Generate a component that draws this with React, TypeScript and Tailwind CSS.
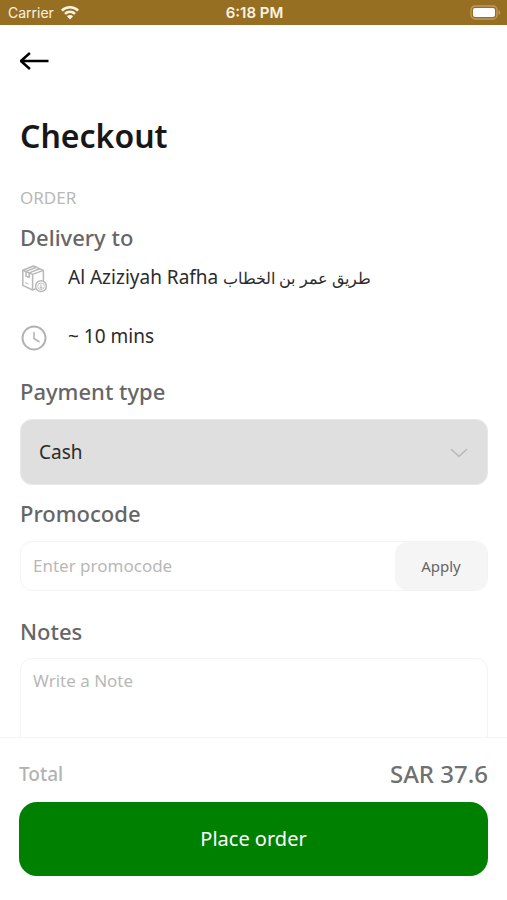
import React, { useState } from "react";

interface SectionTitleProps {
  htmlFor?: string;
  children: React.ReactNode;
}

const WifiIcon = () => (
  <svg viewBox="0 0 20 15" className="w-5 h-[15px]" fill="none" stroke="currentColor" strokeWidth="2.6">
    <path d="M1.9 5.6a11.4 11.4 0 0 1 16.2 0" />
    <path d="M5 8.9a7 7 0 0 1 10 0" />
    <path d="M10 14.4 6.9 11.2a4.4 4.4 0 0 1 6.2 0Z" fill="currentColor" stroke="none" />
  </svg>
);

const BatteryIcon = () => (
  <svg viewBox="0 0 31 15" className="w-[31px] h-[15px]" fill="none">
    <rect x="1" y="1" width="26" height="13" rx="4" stroke="#c09a60" strokeWidth="1.3" />
    <rect x="3" y="3" width="22" height="9" rx="2" fill="#fff" />
    <path d="M28.5 5v5c1-.4 1.7-1.4 1.7-2.5s-.7-2.1-1.7-2.5Z" fill="#c09a60" />
  </svg>
);

const BackIcon = () => (
  <svg
    viewBox="0 0 30 24"
    className="w-[30px] h-6"
    fill="none"
    stroke="currentColor"
    strokeWidth="2.4"
    strokeLinejoin="round"
  >
    <path d="M28.5 12H.9M9.9 4 .9 12l9 8" />
  </svg>
);

const PackageIcon = () => (
  <svg
    viewBox="0 0 28 28"
    className="w-7 h-7 mt-1 shrink-0"
    fill="none"
    stroke="#b8b8b8"
    strokeWidth="1.5"
    strokeLinejoin="round"
  >
    <path d="M17 23.4 12.6 25 2.8 20.4V5.2L12.6 9.4V25M12.6 9.4 23.4 5.4V16M2.800 5.200 13.400 1 23.400 5.400" />
    <path d="M6 6.400 16.400 2.300M9.200 7.900 19.800 3.800M6 6.600V11l3.200 1.400V7.900" />
    <path d="M5 17.500l3.400 1.600" strokeWidth="1" />
    <circle cx="21" cy="21.200" r="5.400" fill="#fff" />
    <circle cx="21" cy="21.200" r="3.300" strokeWidth=".8" />
    <path d="M21 23.500v-4.400M19.700 21.900l1.300 1.400 1.300-1.400" strokeWidth="1" />
  </svg>
);

const ClockIcon = () => (
  <svg viewBox="0 0 28 28" className="w-7 h-7 mt-1 shrink-0" fill="none" stroke="#b3b3b3">
    <circle cx="14" cy="14" r="11.5" strokeWidth="2" />
    <path d="M14 8v6.500l5.500 3.500" strokeWidth="1.5" />
  </svg>
);

const ChevronIcon = () => (
  <svg
    viewBox="0 0 18 10"
    className="pointer-events-none absolute right-5 top-[29px] w-[18px] h-[10px]"
    fill="none"
    stroke="#b8b8b8"
    strokeWidth="1.5"
  >
    <path d="M1 1l8 7.5L17 1" />
  </svg>
);

const SectionTitle: React.FC<SectionTitleProps> = ({ htmlFor, children }) => {
  const classes = "block text-[22px] leading-8 font-medium text-[#666666]";

  return htmlFor ? (
    <h2>
      <label htmlFor={htmlFor} className={classes}>
        {children}
      </label>
    </h2>
  ) : (
    <h2 className={classes}>{children}</h2>
  );
};

const App: React.FC = () => {
  const [payment, setPayment] = useState("cash");
  const [promocode, setPromocode] = useState("");
  const [note, setNote] = useState("");

  return (
    <div className="h-screen flex flex-col bg-white font-['Noto_Sans',sans-serif]">
      {/* Status bar */}
      <div className="grid grid-cols-3 items-center h-[25px] shrink-0 pl-2 pr-1.5 bg-[#966f22] text-[#fbf3e4] text-sm font-['Inter',sans-serif]">
        <div className="flex items-center gap-1.5">
          <span>Carrier</span>
          <WifiIcon />
        </div>
        <span className="text-center text-[15px] font-semibold">6:18 PM</span>
        <div className="flex justify-end">
          <BatteryIcon />
        </div>
      </div>

      <main className="flex-1 min-h-0 overflow-y-auto [scrollbar-width:none] pl-5 pr-[19px]">
        <button type="button" aria-label="Back" className="block mt-6 text-black">
          <BackIcon />
        </button>

        <h1 className="mt-[43px] text-[32px] leading-10 font-semibold text-[#171717]">Checkout</h1>

        {/* Order */}
        <p className="mt-[30px] text-[17px] leading-6 text-[#b8b8b8]">ORDER</p>
        <div className="mt-[11px]">
          <SectionTitle>Delivery to</SectionTitle>
        </div>
        <div className="mt-2 flex items-center gap-5 text-[19px] leading-8 text-[#2b2b2b]">
          <PackageIcon />
          <span>
            Al Aziziyah Rafha <bdi lang="ar" className="text-base">طريق عمر بن الخطاب</bdi>
          </span>
        </div>
        <div className="mt-[27px] flex items-center gap-5 text-[19px] leading-8 text-[#2b2b2b]">
          <ClockIcon />
          <span>~ 10 mins</span>
        </div>

        {/* Payment */}
        <div className="mt-[23px]">
          <SectionTitle htmlFor="payment">Payment type</SectionTitle>
        </div>
        <div className="relative mt-3">
          <select
            id="payment"
            value={payment}
            onChange={(e) => setPayment(e.target.value)}
            className="w-full h-[66px] appearance-none rounded-xl border border-[#e8e8e8] bg-[#dfdfdf] px-[18px] text-[19px] text-[#2b2b2b]"
          >
            <option value="cash">Cash</option>
          </select>
          <ChevronIcon />
        </div>

        {/* Promocode */}
        <div className="mt-3">
          <SectionTitle htmlFor="promocode">Promocode</SectionTitle>
        </div>
        <div className="mt-3 flex h-[50px] rounded-xl border border-[#f3f3f3]">
          <input
            id="promocode"
            type="text"
            placeholder="Enter promocode"
            value={promocode}
            onChange={(e) => setPromocode(e.target.value)}
            className="flex-1 min-w-0 px-3 text-[17px] text-[#2b2b2b] placeholder:text-[#b8b8b8] outline-none"
          />
          <button type="button" className="w-23 rounded-xl bg-[#f5f5f5] text-[15px] text-[#666666]">
            Apply
          </button>
        </div>

        {/* Notes */}
        <div className="mt-6">
          <SectionTitle htmlFor="note">Notes</SectionTitle>
        </div>
        <textarea
          id="note"
          rows={4}
          placeholder="Write a Note"
          value={note}
          onChange={(e) => setNote(e.target.value)}
          className="mt-[11px] mb-6 block w-full resize-none rounded-xl border border-[#f3f3f3] px-3 py-2.5 text-[17px] leading-6 text-[#2b2b2b] placeholder:text-[#b8b8b8] outline-none"
        />
      </main>

      {/* Total */}
      <footer className="shrink-0 border-t border-[#f3f3f3] px-[19px] pt-5 pb-6">
        <div className="flex items-center justify-between leading-8 font-medium">
          <span className="text-[19px] text-[#b3b3b3]">Total</span>
          <span className="text-2xl leading-8 text-[#707070]">SAR 37.6</span>
        </div>
        <button
          type="button"
          className="mt-3 block w-full h-[74px] rounded-[18px] bg-[#008000] text-xl text-white"
        >
          Place order
        </button>
      </footer>
    </div>
  );
};

export default App;
